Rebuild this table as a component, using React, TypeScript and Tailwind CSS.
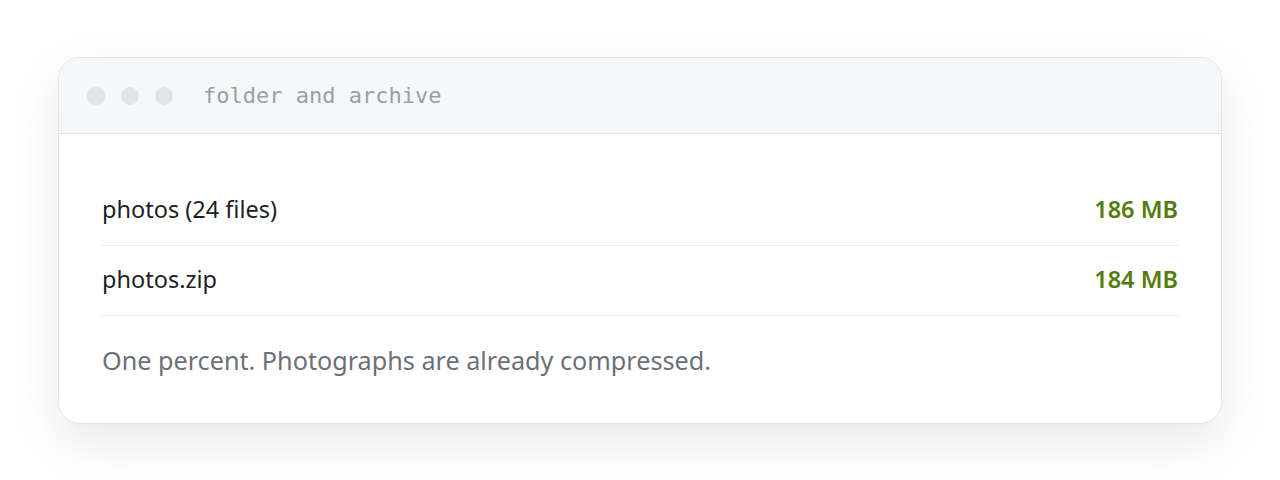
import React from 'react'

const rows = [
  { name: 'photos (24 files)', size: '186 MB' },
  { name: 'photos.zip', size: '184 MB' },
]

const App: React.FC = () => {
  return (
    <div className="min-h-[480px] bg-white pt-[57px] px-[58px] font-['Noto_Sans','Open_Sans',sans-serif]">
      <div className="rounded-[22px] border border-[#e3e5e8] bg-white overflow-hidden shadow-[0_18px_50px_rgba(0,0,0,0.09)]">
        <div className="h-[76px] flex items-center gap-4 pl-[28px] pr-[27px] bg-[#f6f7f8] border-b border-[#e1e4e8]">
          <span className="w-[18px] h-[18px] rounded-full bg-[#e1e4e8]" />
          <span className="w-[18px] h-[18px] rounded-full bg-[#e1e4e8]" />
          <span className="w-[18px] h-[18px] rounded-full bg-[#e1e4e8]" />
          <span className="ml-[14px] text-[22px] text-[#9a9fa7] font-['DejaVu_Sans_Mono',monospace]">folder and archive</span>
        </div>
        <div className="pl-[43px] pr-[43px] pt-[42px] pb-[47px]">
          {rows.map((r) => (
            <div key={r.name} className="flex justify-between items-center h-[70px] border-b border-[#eceef0] pb-[2px]">
              <span className="text-[23.5px] text-[#1c1f24]">{r.name}</span>
              <span className="text-[23.5px] font-semibold text-[#577a0c]">{r.size}</span>
            </div>
          ))}
          <p className="mt-[28px] text-[25.2px] leading-[32px] text-[#6b7079]">One percent. Photographs are already compressed.</p>
        </div>
      </div>
    </div>
  )
}

export default App
